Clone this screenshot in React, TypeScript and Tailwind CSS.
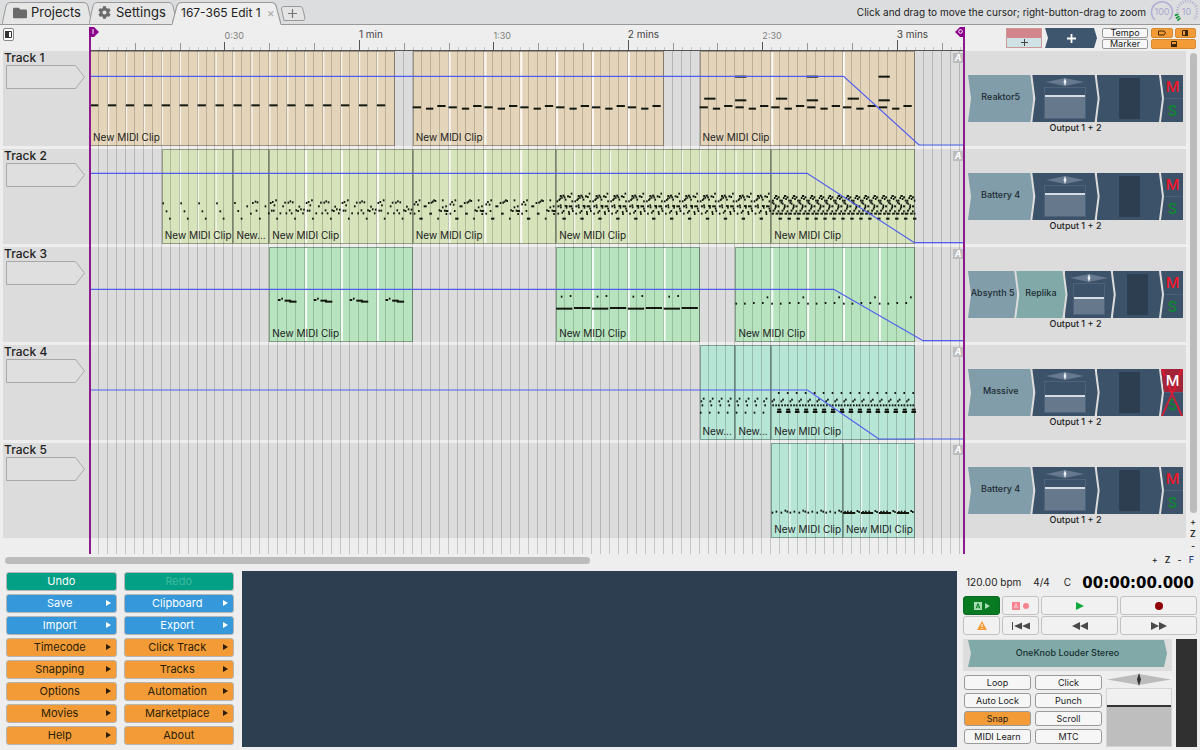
import React from 'react';
import { FaFolder, FaCog } from 'react-icons/fa';

// Horizontal unit: one bar is 27 ticks, and the visible range is 97.5 bars.
const TICKS_PER_BAR = 27;
const VISIBLE_BARS = 97.5;
const TOTAL_TICKS = VISIBLE_BARS * TICKS_PER_BAR;

type Note = [tick: number, row: number, length?: number];

interface Clip {
  name: string;
  start: number;
  end: number;
  loop: number;
  notes: Note[];
}

interface Track {
  name: string;
  color: string;
  clips: Clip[];
  automation?: string;
  plugins: string[];
  level: string;
  muted?: boolean;
}

const bassLine: Note[] = [[0, 168, 25], [40, 172, 22], [74, 164, 25]];

const drumsC: Note[] = [
  [2, 161], [8, 158], [13, 168], [18, 153], [5, 184], [11, 184], [21, 208], [31, 192], [39, 171], [45, 160],
  [55, 160], [61, 156], [68, 159], [49, 192], [59, 183], [65, 192], [75, 208], [79, 183], [84, 185], [88, 172],
  [93, 180], [99, 192], [102, 181],
];

const drumsD: Note[] = [
  [3, 165], [8, 158], [13, 166], [18, 153], [3, 193], [16, 185], [20, 208, 10], [33, 171, 9], [46, 161], [54, 160],
  [58, 157], [62, 153], [66, 155], [50, 193, 8], [74, 208], [78, 183], [83, 185], [88, 153], [88, 174], [94, 184],
  [98, 171], [98, 185, 9], [99, 194],
];

const drumsE: Note[] = [
  [1, 156], [4, 171, 6], [4, 193], [7, 152], [10, 148], [11, 140, 6], [15, 145], [19, 139, 6], [23, 144], [11, 168],
  [12, 174], [16, 190], [20, 185], [19, 208, 10], [26, 151], [26, 170, 8], [29, 175], [33, 141, 6], [38, 171, 11],
  [39, 143], [36, 188], [37, 194], [44, 133], [46, 156], [46, 178], [48, 185],
];

const drumsF: Note[] = [
  [1, 160], [2, 154, 6], [5, 163], [8, 146], [11, 140, 7], [15, 149], [19, 144, 6], [24, 154], [11, 168], [11, 173],
  [19, 171, 6], [4, 184, 6], [9, 178], [1, 193, 7], [13, 193, 8], [19, 186, 5], [22, 208, 10], [24, 193],
];

const tracks: Track[] = [
  {
    name: 'Track 1',
    color: 'bg-[#e4d5ba]',
    clips: [
      { name: 'New MIDI Clip', start: 0, end: 34, loop: 2, notes: [[0, 162, 25]] },
      { name: 'New MIDI Clip', start: 36, end: 64, loop: 4, notes: bassLine },
      {
        name: 'New MIDI Clip',
        start: 68,
        end: 92,
        loop: 8,
        notes: [
          ...bassLine, [108, 168, 25], [148, 172, 22], [182, 164, 25],
          [14, 142, 34], [107, 147, 34], [107, 76, 34],
        ],
      },
    ],
    automation: '0,76 2270,76 2497,282 2632,282',
    plugins: ['Reaktor5'],
    level: 'h-[23px]',
  },
  {
    name: 'Track 2',
    color: 'bg-[#d6e3bb]',
    clips: [
      { name: 'New MIDI Clip', start: 8, end: 16, loop: 2, notes: [[2, 162], [12, 186], [22, 208]] },
      {
        name: 'New...',
        start: 16,
        end: 20,
        loop: 4,
        notes: [
          [2, 161], [12, 185], [22, 208], [39, 171], [50, 193], [56, 161], [64, 157], [70, 159], [67, 184],
          [77, 208], [94, 171], [104, 192],
        ],
      },
      { name: 'New MIDI Clip', start: 20, end: 36, loop: 4, notes: drumsC },
      { name: 'New MIDI Clip', start: 36, end: 52, loop: 4, notes: drumsD },
      { name: 'New MIDI Clip', start: 52, end: 76, loop: 2, notes: drumsE },
      { name: 'New MIDI Clip', start: 76, end: 92, loop: 1, notes: drumsF },
    ],
    automation: '0,73 2160,73 2483,281 2632,281',
    plugins: ['Battery 4'],
    level: 'h-[23px]',
  },
  {
    name: 'Track 3',
    color: 'bg-[#b7e4bf]',
    clips: [
      { name: 'New MIDI Clip', start: 20, end: 36, loop: 4, notes: [[26, 158, 8], [36, 154], [46, 160, 20], [60, 163, 22]] },
      { name: 'New MIDI Clip', start: 52, end: 68, loop: 4, notes: [[14, 148], [41, 146], [0, 184, 49], [54, 182, 49]] },
      { name: 'New MIDI Clip', start: 72, end: 92, loop: 4, notes: [[0, 169], [26, 169], [53, 167], [80, 167], [94, 150]] },
    ],
    automation: '0,127 2240,127 2509,281 2632,281',
    plugins: ['Absynth 5', 'Replika'],
    level: 'h-[17px]',
  },
  {
    name: 'Track 4',
    color: 'bg-[#b7e5d6]',
    clips: [
      { name: 'New...', start: 68, end: 72, loop: 1, notes: [[1, 202], [3, 168], [6, 180], [10, 160]] },
      { name: 'New...', start: 72, end: 76, loop: 1, notes: [[1, 202], [3, 168], [6, 180], [10, 160]] },
      {
        name: 'New MIDI Clip',
        start: 76,
        end: 92,
        loop: 1,
        notes: [[1, 168], [6, 163], [3, 180], [12, 180], [20, 180], [20, 143], [18, 193, 12], [17, 200, 14]],
      },
    ],
    automation: '0,135 2161,135 2376,282 2632,282',
    plugins: ['Massive'],
    level: 'h-[17px]',
    muted: true,
  },
  {
    name: 'Track 5',
    color: 'bg-[#b7e5d6]',
    clips: [
      { name: 'New MIDI Clip', start: 76, end: 84, loop: 2, notes: [[1, 208], [13, 205], [28, 208], [40, 202], [46, 205]] },
      {
        name: 'New MIDI Clip',
        start: 84,
        end: 92,
        loop: 2,
        notes: [[0, 209, 37], [12, 205], [22, 205], [41, 203], [46, 206], [4, 206]],
      },
    ],
    plugins: ['Battery 4'],
    level: 'h-[23px]',
  },
];

const menuItems = [
  { label: 'Undo', color: 'bg-[#04a085] text-white' },
  { label: 'Redo', color: 'bg-[#04a085] text-[#40b89f]' },
  { label: 'Save', color: 'bg-[#3498db] text-white', arrow: true },
  { label: 'Clipboard', color: 'bg-[#3498db] text-white', arrow: true },
  { label: 'Import', color: 'bg-[#3498db] text-white', arrow: true },
  { label: 'Export', color: 'bg-[#3498db] text-white', arrow: true },
  { label: 'Timecode', color: 'bg-[#f39c37] text-[#2b1d08]', arrow: true },
  { label: 'Click Track', color: 'bg-[#f39c37] text-[#2b1d08]', arrow: true },
  { label: 'Snapping', color: 'bg-[#f39c37] text-[#2b1d08]', arrow: true },
  { label: 'Tracks', color: 'bg-[#f39c37] text-[#2b1d08]', arrow: true },
  { label: 'Options', color: 'bg-[#f39c37] text-[#2b1d08]', arrow: true },
  { label: 'Automation', color: 'bg-[#f39c37] text-[#2b1d08]', arrow: true },
  { label: 'Movies', color: 'bg-[#f39c37] text-[#2b1d08]', arrow: true },
  { label: 'Marketplace', color: 'bg-[#f39c37] text-[#2b1d08]', arrow: true },
  { label: 'Help', color: 'bg-[#f39c37] text-[#2b1d08]', arrow: true },
  { label: 'About', color: 'bg-[#f39c37] text-[#2b1d08]' },
];

const rulerLabels = [
  { bar: 15, label: '0:30' },
  { bar: 30, label: '1 min', major: true },
  { bar: 45, label: '1:30' },
  { bar: 60, label: '2 mins', major: true },
  { bar: 75, label: '2:30' },
  { bar: 90, label: '3 mins', major: true },
];

const toggles = ['Loop', 'Click', 'Auto Lock', 'Punch', 'Snap', 'Scroll', 'MIDI Learn', 'MTC'];

const bars = Array.from({ length: 97 }, (_, i) => i + 1);
const percent = (bar: number) => `${(bar / VISIBLE_BARS) * 100}%`;

interface TabProps {
  active?: boolean;
  className: string;
  children: React.ReactNode;
}

const Tab: React.FC<TabProps> = ({ active, className, children }) => (
  <div className={`grid h-[25px] ${active ? 'z-10' : ''} ${className}`}>
    <svg className="col-start-1 row-start-1 h-[25px] w-full" viewBox="0 0 90 25" preserveAspectRatio="none">
      <path
        d="M0 24.5 L4 6 Q5 2.5 8 2.5 L82 2.5 Q85 2.5 86 6 L90 24.5"
        fill={active ? '#eeeeee' : '#e6e6e6'}
        stroke="#999"
      />
      {active ? <path d="M0.5 24.5 H89.5" stroke="#eeeeee" /> : <path d="M0 24.5 H90" stroke="#999" />}
    </svg>
    <div className="z-10 col-start-1 row-start-1 flex items-center whitespace-nowrap text-[#222]">{children}</div>
  </div>
);

const Ruler: React.FC = () => (
  <div className="relative h-[26px]">
    <svg className="h-full w-full" viewBox="0 0 874 26" preserveAspectRatio="none">
      {bars.map((bar) => {
        const x = Math.round((bar * 874) / VISIBLE_BARS) + 0.5;
        const top = bar % 30 === 0 ? 15 : bar % 15 === 0 ? 17 : bar % 5 === 0 ? 18 : 22;
        return <path key={bar} d={`M${x} ${top} V25`} stroke={bar % 15 === 0 ? '#555' : bar % 5 === 0 ? '#999' : '#c4c4c4'} />;
      })}
      <path d="M0 25.5 H874" stroke="#555" />
    </svg>
    {rulerLabels.map(({ bar, label, major }) => (
      <span
        key={label}
        className={`absolute leading-3 ${major ? 'top-[3px] text-[10px] text-[#444]' : 'top-[5px] text-[9px] text-[#808080]'}`}
        style={{ left: percent(bar) }}
      >
        {label}
      </span>
    ))}
  </div>
);

const TrackLane: React.FC<{ track: Track }> = ({ track }) => (
  <div className="relative mb-[3px] h-[95px] bg-[#dcdcdc]">
    {track.clips.map((clip) => (
      <div
        key={clip.start}
        className={`absolute inset-y-0 flex items-end border border-black/30 px-[2px] pb-[2px] text-[10px] leading-3 whitespace-nowrap text-[#1c1c1c] ${track.color}`}
        style={{ left: percent(clip.start), width: percent(clip.end - clip.start) }}
      >
        <span className="z-20">{clip.name}</span>
      </div>
    ))}
    <svg className="absolute inset-0 h-full w-full" viewBox={`0 0 ${TOTAL_TICKS} 285`} preserveAspectRatio="none">
      {track.clips.map((clip) => {
        const repeats = (clip.end - clip.start) / clip.loop;
        const starts = Array.from({ length: repeats }, (_, i) => (clip.start + i * clip.loop) * TICKS_PER_BAR);
        return (
          <g key={clip.start}>
            {clip.loop > 1 &&
              starts.slice(1).map((x) => (
                <rect key={x} x={x} y="3" width={clip.loop > 2 ? 6 : 4} height="279" fill="#fff" opacity={clip.loop > 2 ? 0.85 : 0.7} />
              ))}
            {starts.map((x) =>
              clip.notes.map(([tick, row, length = 5]) => (
                <rect key={`${x}-${tick}-${row}`} x={x + tick} y={row - 2} width={length} height="6" fill="#14180f" />
              ))
            )}
          </g>
        );
      })}
    </svg>
  </div>
);

const AutomationLine: React.FC<{ points: string }> = ({ points }) => (
  <svg className="h-full w-full" viewBox={`0 0 ${TOTAL_TICKS} 285`} preserveAspectRatio="none">
    <polyline points={points} fill="none" stroke="#4f5cf0" strokeWidth="1.2" vectorEffect="non-scaling-stroke" />
  </svg>
);

const blockShape =
  '[clip-path:polygon(0_0,calc(100%_-_3px)_0,100%_50%,calc(100%_-_3px)_100%,0_100%,3px_50%)]';

const Rack: React.FC<{ track: Track }> = ({ track }) => (
  <div className="mb-[3px] h-[95px] bg-[#dcdcdc] pt-6 pr-[3px] pl-1">
    <div className="flex h-[47px]">
      {track.plugins.map((plugin) => (
        <button
          key={plugin}
          className={`-mr-px min-w-0 flex-1 pb-[3px] text-[9px] font-medium whitespace-nowrap text-[#1d2b33] ${blockShape} ${
            plugin === 'Replika' ? 'bg-[#80a9a8]' : 'bg-[#809da9]'
          }`}
        >
          {plugin}
        </button>
      ))}
      <div className={`-mr-px flex min-w-0 flex-1 flex-col items-center bg-[#3b5269] pt-[3px] ${blockShape}`}>
        <svg className="h-2 w-[38px]" viewBox="0 0 38 8">
          <path d="M0 4 L19 0 L38 4 L19 8 Z" fill="#66798e" />
          <path d="M19 0 L20.5 4 L19 8 L17.5 4 Z" fill="#e8edf2" />
        </svg>
        <label className="mt-px grid h-8 w-[64%]">
          <span className="col-start-1 row-start-1 flex flex-col justify-end border border-[#4e6379]">
            <span className={`border-t-2 border-[#d5dce3] bg-[#66788b] ${track.level}`} />
          </span>
          <input type="range" defaultValue={70} aria-label={`${track.name} volume`} className="col-start-1 row-start-1 w-full min-w-0 opacity-0" />
        </label>
      </div>
      <div className={`-mr-px flex min-w-0 flex-1 justify-center bg-[#3b5269] py-[3px] ${blockShape}`}>
        <div className="w-[21px] bg-[#2c3e50]" />
      </div>
      <div className="grid w-[22px] [clip-path:polygon(0_0,100%_0,100%_100%,0_100%,3px_50%)]">
        <div className="col-start-1 row-start-1 flex flex-col bg-[#3b5269] text-center text-[15px] leading-[20px] font-medium">
          <button className={`flex-1 border-b border-[#4a6078] pl-px ${track.muted ? 'bg-[#a3253a] text-white' : 'text-[#f5152b]'}`}>M</button>
          <button className="flex-1 pl-px text-[#0a8a2c]">S</button>
        </div>
        {track.muted && (
          <svg className="pointer-events-none z-10 col-start-1 row-start-1 h-full w-full" viewBox="0 0 22 47">
            <path d="M1 0 L4 7 M21 0 L18 7 M7 16 L21 47 M15 16 L1 47" stroke="#ee1530" strokeWidth="2" opacity="0.8" />
          </svg>
        )}
      </div>
    </div>
    <div className="text-center text-[9px] leading-3 font-medium text-[#222]">Output 1 + 2</div>
  </div>
);

const TransportButton: React.FC<{ label: string; className?: string; children: React.ReactNode }> = ({
  label,
  className = 'border-[#c2c2c2] bg-[#f1f1f1]',
  children,
}) => (
  <button aria-label={label} className={`flex h-[19px] items-center justify-center rounded-[3px] border ${className}`}>
    {children}
  </button>
);

const App: React.FC = () => {
  return (
    <div className="flex min-h-screen flex-col bg-[#eeeeee] font-['Inter','Liberation_Sans',sans-serif] text-[#222]">
      <header className="flex h-[25px] items-start border-b border-[#999] bg-[#dcddde] pl-[2px]">
        <Tab className="w-[90px] text-[13px]">
          <FaFolder className="mr-1 ml-[11px] h-[14px] w-[14px] text-[#6b6b6b]" />
          <button>Projects</button>
        </Tab>
        <Tab className="-ml-[3px] w-[88px] text-[13px]">
          <FaCog className="mr-[5px] ml-[9px] h-[13px] w-[13px] text-[#6b6b6b]" />
          <button>Settings</button>
        </Tab>
        <Tab active className="-ml-[5px] w-[109px] text-[12px]">
          <button className="ml-[9px]">167-365 Edit 1</button>
          <button aria-label="Close tab" className="ml-[6px] text-[12px] text-[#aaa]">×</button>
        </Tab>
        <button aria-label="New tab" className="h-[25px] w-[26px]">
          <svg className="h-full w-full" viewBox="0 0 26 25">
            <path d="M3 20.5 L0.5 9 Q0.5 6.5 2.5 6.5 L19 6.5 Q21 6.5 21.5 8 L24 18 Q24 20.5 22 20.5 Z" fill="#e4e4e4" stroke="#999" />
            <path d="M7 13.5 H16 M11.5 9 V18" stroke="#777" strokeWidth="1.2" />
          </svg>
        </button>
        <div className="ml-auto flex h-6 items-center pr-[2px] text-[10px]">
          <span className="mr-1 whitespace-nowrap">Click and drag to move the cursor; right-button-drag to zoom</span>
          <svg className="h-6 w-6" viewBox="0 0 24 24">
            <path d="M5 20 A10.5 10.5 0 1 1 19 20" fill="none" stroke="#b3afd4" strokeWidth="1.5" />
            <text x="12" y="15" textAnchor="middle" fontSize="9" fill="#a9a5d0">100</text>
          </svg>
          <svg className="h-6 w-6" viewBox="0 0 24 24">
            <path d="M3.5 13 A10 10 0 1 1 19 19.5" fill="none" stroke="#b3afd4" strokeWidth="3" strokeDasharray="1 1.5" />
            <path d="M2.5 14 Q3.5 18 6 20.5" fill="none" stroke="#12943a" strokeWidth="4" strokeDasharray="1.5 1" />
            <text x="12.5" y="15" textAnchor="middle" fontSize="9" fill="#a9a5d0">10</text>
          </svg>
        </div>
      </header>

      <main className="flex flex-1">
        {/* Track headers */}
        <div className="w-[90px] shrink-0 pl-[3px]">
          <div className="flex h-[26px] items-start pt-[3px]">
            <button aria-label="Toggle track headers" className="flex h-[13px] w-[11px] items-center justify-center rounded-[2px] border border-[#888] bg-white">
              <svg className="h-[7px] w-[7px]" viewBox="0 0 7 7">
                <path d="M0.5 0.5 H6.5 V6.5 H0.5 Z" fill="none" stroke="#333" />
                <path d="M0 0 H4 V7 H0 Z" fill="#333" />
              </svg>
            </button>
          </div>
          {tracks.map((track) => (
            <div key={track.name} className="mb-[3px] h-[95px] bg-[#dcdcdc]">
              <div className="h-[14px] pl-px text-[12px] leading-[14px] font-medium">{track.name}</div>
              <button aria-label={`${track.name} input`} className="ml-[3px] block">
                <svg className="h-6 w-[79px]" viewBox="0 0 79 24">
                  <path d="M0.5 0.5 H69.5 L78.5 12 L69.5 23.5 H0.5 Z" fill="#dfdfdf" stroke="#a8a8a8" />
                </svg>
              </button>
            </div>
          ))}
        </div>

        {/* Timeline */}
        <div className="relative flex min-w-0 flex-1 flex-col">
          <Ruler />
          <div className="relative flex-1 pb-[10px]">
            {tracks.map((track) => (
              <TrackLane key={track.name} track={track} />
            ))}
            <svg className="pointer-events-none absolute inset-0 z-10 h-full w-full" viewBox="0 0 874 503" preserveAspectRatio="none">
              {bars.map((bar) => {
                const x = Math.round((bar * 874) / VISIBLE_BARS) - 0.5;
                return <path key={bar} d={`M${x} 0 V503`} stroke="#000" opacity="0.17" />;
              })}
            </svg>
            <div className="pointer-events-none absolute inset-x-0 top-0 z-10">
              {tracks.map((track) => (
                <div key={track.name} className="relative mb-[3px] h-[95px]">
                  {track.automation && <AutomationLine points={track.automation} />}
                  <span className="absolute top-[2px] right-px h-[10px] w-[10px] bg-[#bdbdbd] text-center text-[9px] leading-[10px] font-bold text-white italic">
                    A
                  </span>
                </div>
              ))}
            </div>
          </div>
          <div className="absolute inset-y-0 -left-px z-20 mt-[2px] w-[2px] bg-[#8c1a8c]" />
          <svg className="absolute top-[2px] -left-px z-20 h-[10px] w-[10px]" viewBox="0 0 10 10">
            <path d="M0 0 H5 L10 5 L5 10 H0 Z" fill="#8b008b" />
            <path d="M4 2 V7" stroke="#fff" />
          </svg>
          <div className="absolute inset-y-0 -right-px z-20 mt-[2px] w-[2px] bg-[#8c1a8c]" />
          <svg className="absolute top-[2px] -right-px z-20 h-[10px] w-[10px]" viewBox="0 0 10 10">
            <path d="M10 0 H5 L0 5 L5 10 H10 Z" fill="#8b008b" />
            <circle cx="5.5" cy="4.5" r="1.8" fill="none" stroke="#fff" />
          </svg>
        </div>

        {/* Plugin racks */}
        <div className="w-[236px] shrink-0">
          <div className="flex h-[26px] items-start justify-end gap-[3px] pt-[3px] pr-1">
            <button aria-label="Add track" className="flex h-5 w-[36px] flex-col border border-[#c99]">
              <span className="h-[9px] w-full bg-[#d2868b]" />
              <span className="flex h-[9px] w-full items-center justify-center bg-[#cfe3e6]">
                <svg className="h-[7px] w-[7px]" viewBox="0 0 7 7">
                  <path d="M0 3.5 H7 M3.5 0 V7" stroke="#444" />
                </svg>
              </span>
            </button>
            <button aria-label="Add plugin" className={`mr-[2px] flex h-5 w-[52px] items-center justify-center bg-[#3f566f] ${blockShape}`}>
              <svg className="h-[9px] w-[9px]" viewBox="0 0 9 9">
                <path d="M0 4.5 H9 M4.5 0 V9" stroke="#fff" strokeWidth="1.8" />
              </svg>
            </button>
            <div className="grid w-[46px] gap-px text-[9px] leading-[8px]">
              <button className="h-[10px] rounded-[2px] border border-[#999] bg-[#f8f8f8]">Tempo</button>
              <button className="h-[10px] rounded-[2px] border border-[#999] bg-[#f8f8f8]">Marker</button>
            </div>
            <div className="grid w-[45px] grid-cols-2 gap-x-[2px] gap-y-px">
              <button aria-label="Track view" className="flex h-[10px] items-center justify-center rounded-[2px] border border-[#d58a32] bg-[#f39c37]">
                <svg className="h-[6px] w-2" viewBox="0 0 8 6">
                  <path d="M0.5 1 H6 L7.5 3 L6 5 H0.5 Z" fill="none" stroke="#3a2508" />
                </svg>
              </button>
              <button aria-label="Rack view" className="flex h-[10px] items-center justify-center rounded-[2px] border border-[#d58a32] bg-[#f39c37]">
                <svg className="h-[6px] w-[6px]" viewBox="0 0 6 6">
                  <path d="M0.5 0.5 H5.5 V5.5 H0.5 Z" fill="none" stroke="#3a2508" />
                  <path d="M3 0 H6 V6 H3 Z" fill="#3a2508" />
                </svg>
              </button>
              <button aria-label="Controls view" className="col-span-2 flex h-[10px] items-center justify-center rounded-[2px] border border-[#d58a32] bg-[#f39c37]">
                <svg className="h-[6px] w-[6px]" viewBox="0 0 6 6">
                  <path d="M0.5 0.5 H5.5 V5.5 H0.5 Z" fill="none" stroke="#3a2508" />
                  <path d="M0 3 H6 V6 H0 Z" fill="#3a2508" />
                </svg>
              </button>
            </div>
          </div>
          <div className="flex">
            <div className="min-w-0 flex-1">
              {tracks.map((track) => (
                <Rack key={track.name} track={track} />
              ))}
            </div>
            <div className="flex w-[14px] flex-col items-center pt-[2px]">
              <div className="h-[460px] w-[7px] rounded-full bg-[#bcbcbc]" />
              <div className="mt-[3px] flex flex-col text-[9px] leading-3 font-medium">
                <button>+</button>
                <button>Z</button>
                <button>-</button>
              </div>
            </div>
          </div>
        </div>
      </main>

      <div className="flex h-[15px] items-start pr-[6px] pl-[5px]">
        <div className="flex-1 pt-[3px]">
          <div className="h-[7px] w-[51%] rounded-full bg-[#bcbcbc]" />
        </div>
        <div className="flex gap-[7px] text-[9px] leading-3 font-medium">
          <button>+</button>
          <button>Z</button>
          <button>-</button>
          <button className="text-[#1d3a8a]">F</button>
        </div>
      </div>

      <footer className="flex pt-[2px] pr-[3px] pb-[3px] pl-[6px]">
        <div className="grid w-[228px] shrink-0 grid-cols-2 content-start gap-x-[7px] gap-y-[3px] pt-px">
          {menuItems.map(({ label, color, arrow }) => (
            <button
              key={label}
              className={`flex h-[19px] items-center rounded-[3px] border border-[#b5b5b5] px-[5px] pb-px text-[11px] leading-3 ${color}`}
            >
              <span className={`flex-1 text-center ${arrow ? 'pl-[2px]' : ''}`}>{label}</span>
              {arrow && (
                <svg className="h-[6px] w-[5px]" viewBox="0 0 5 6">
                  <path d="M0 0 L5 3 L0 6 Z" fill="currentColor" />
                </svg>
              )}
            </button>
          ))}
        </div>

        <div className="ml-2 min-w-0 flex-1 bg-[#2c3e50]" />

        <div className="ml-[6px] flex w-[234px] shrink-0 flex-col">
          <div className="flex h-[25px] items-center pr-[3px] pb-[2px] pl-[3px] text-[10px] whitespace-nowrap">
            <span>120.00 bpm</span>
            <span className="ml-3">4/4</span>
            <span className="ml-[14px]">C</span>
            <span className="ml-auto font-['DejaVu_Sans',sans-serif] text-[15px] leading-4 font-bold text-black">00:00:00.000</span>
          </div>
          <div className="grid grid-cols-[37px_37px_1fr_1fr] gap-x-[2px] gap-y-px">
            <TransportButton label="Read automation" className="border-[#0b6a22] bg-[#087a22]">
              <svg className="h-2 w-4" viewBox="0 0 16 8">
                <path d="M0 0 H8 V8 H0 Z M11 1 L16 4 L11 7 Z" fill="#a9dcb3" />
                <path d="M2 6.5 L4 1.5 L6 6.5 M3 5 H5.2" fill="none" stroke="#087a22" />
              </svg>
            </TransportButton>
            <TransportButton label="Write automation">
              <svg className="h-2 w-[17px]" viewBox="0 0 17 8">
                <path d="M0 0 H8 V8 H0 Z" fill="#f5828d" />
                <path d="M2 6.5 L4 1.5 L6 6.5 M3 5 H5.2" fill="none" stroke="#f9c9ce" />
                <circle cx="14" cy="4" r="3" fill="#f5828d" />
              </svg>
            </TransportButton>
            <TransportButton label="Play">
              <svg className="h-2 w-2" viewBox="0 0 8 8">
                <path d="M0 0 L8 4 L0 8 Z" fill="#0fa83c" />
              </svg>
            </TransportButton>
            <TransportButton label="Record">
              <svg className="h-2 w-2" viewBox="0 0 8 8">
                <circle cx="4" cy="4" r="4" fill="#8f0008" />
              </svg>
            </TransportButton>
            <TransportButton label="Panic">
              <svg className="h-[9px] w-[10px]" viewBox="0 0 10 9">
                <path d="M5 0 L10 9 H0 Z" fill="#f39c37" />
                <path d="M5 3 V6 M5 7 V8" stroke="#fff" />
              </svg>
            </TransportButton>
            <TransportButton label="Return to start">
              <svg className="h-2 w-[18px]" viewBox="0 0 18 8">
                <path d="M0 0 H1 V8 H0 Z M10 0.5 V7.5 L2 4 Z M18 0.5 V7.5 L10 4 Z" fill="#4a4a4a" />
              </svg>
            </TransportButton>
            <TransportButton label="Rewind">
              <svg className="h-2 w-4" viewBox="0 0 16 8">
                <path d="M8 0 V8 L0 4 Z M16 0 V8 L8 4 Z" fill="#4a4a4a" />
              </svg>
            </TransportButton>
            <TransportButton label="Fast forward">
              <svg className="h-2 w-4" viewBox="0 0 16 8">
                <path d="M0 0 V8 L8 4 Z M8 0 V8 L16 4 Z" fill="#4a4a4a" />
              </svg>
            </TransportButton>
          </div>
          <div className="mt-1 flex flex-1 gap-1">
            <div className="min-w-0 flex-1">
              <div className="flex h-8 items-start bg-[#dddddd] px-[5px] pt-px">
                <button className={`h-[27px] flex-1 bg-[#80a9a8] pb-[2px] text-[9px] font-medium text-[#16302f] ${blockShape}`}>OneKnob Louder Stereo</button>
              </div>
              <div className="flex gap-1 pl-px">
                <div className="grid flex-1 grid-cols-2 content-start gap-x-1 gap-y-[3px] pt-1 text-[9px] leading-[13px]">
                  {toggles.map((label) => (
                    <button
                      key={label}
                      className={`h-[15px] rounded-[3px] border border-[#9a9a9a] ${label === 'Snap' ? 'bg-[#f39c37]' : 'bg-[#f6f6f6]'}`}
                    >
                      {label}
                    </button>
                  ))}
                </div>
                <div className="w-[66px]">
                  <svg className="mt-[2px] h-[13px] w-full" viewBox="0 0 66 13">
                    <path d="M1 6.5 L33 1 L65 6.5 L33 12 Z" fill="#bcbcbc" />
                    <path d="M33 0 L35 6.5 L33 13 L31 6.5 Z" fill="#333" />
                  </svg>
                  <label className="mt-[2px] grid h-[59px]">
                    <span className="col-start-1 row-start-1 flex flex-col justify-end border border-[#d4d4d4] bg-[#f0f0f0]">
                      <span className="h-[41px] border-t-2 border-[#333] bg-[#bebebe]" />
                    </span>
                    <input type="range" defaultValue={70} aria-label="Master volume" className="col-start-1 row-start-1 w-full min-w-0 opacity-0" />
                  </label>
                </div>
              </div>
            </div>
            <div className="w-[21px] bg-[#303030]" />
          </div>
        </div>
      </footer>
    </div>
  );
};

export default App;
